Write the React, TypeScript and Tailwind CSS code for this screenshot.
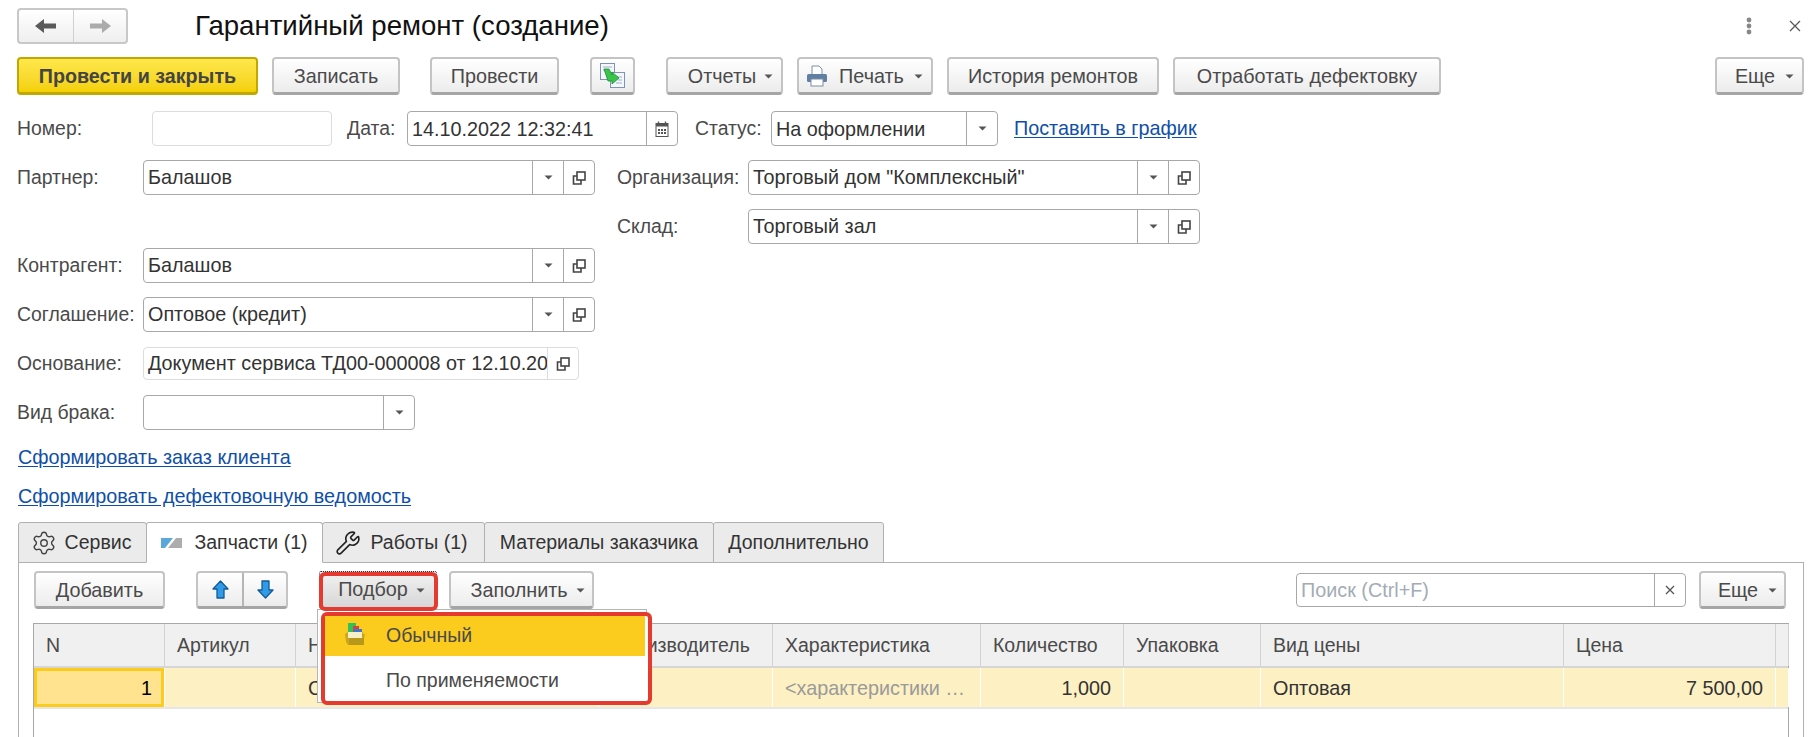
import React from "react";
import { Settings, Wrench } from "lucide-react";

const FONT = "font-['Liberation_Sans',Arial,sans-serif]";

function Caret({ className = "" }: { className?: string }) {
  return (
    <svg width="9" height="5" viewBox="0 0 9 5" className={className}>
      <path d="M0.5 0.5h8L4.5 4.5z" fill="#555" />
    </svg>
  );
}

function OpenIcon() {
  return (
    <svg width="16" height="16" viewBox="0 0 16 16" fill="none" stroke="#444" strokeWidth="1.6">
      <rect x="6" y="2" width="8" height="8" />
      <path d="M6 6H2.5v8H10v-4" />
    </svg>
  );
}

function Btn({
  w,
  ml = 0,
  children,
}: {
  w: number;
  ml?: number;
  children: React.ReactNode;
}) {
  return (
    <div
      style={{ width: w, marginLeft: ml }}
      className="h-[38px] shrink-0 flex items-center justify-center gap-2 rounded-[4px] border-2 border-[#c4c4c4] border-b-[3px] border-b-[#a5a5a5] bg-gradient-to-b from-white to-[#ececec] pt-[2px] text-[19.8px] text-[#4a4a4a]"
    >
      {children}
    </div>
  );
}

function Field({
  w,
  h = 35,
  value,
  select = true,
  open = true,
  light = false,
  ml = 0,
  nudge = false,
}: {
  w: number;
  h?: number;
  value?: string;
  select?: boolean;
  open?: boolean;
  light?: boolean;
  ml?: number;
  nudge?: boolean;
}) {
  const bc = light ? "border-[#dcdcdc]" : "border-[#a8a8a8]";
  return (
    <div
      style={{ width: w, height: h, marginLeft: ml }}
      className={`shrink-0 flex items-stretch rounded-[4px] border ${bc} bg-white text-[19.8px] text-[#333]`}
    >
      <div className={`flex-1 min-w-0 overflow-hidden whitespace-nowrap pl-[4px] flex items-center ${nudge ? "pt-[2px]" : ""}`}>{value}</div>
      {select && (
        <div className="w-[31px] border-l border-[#a8a8a8] flex items-center justify-center">
          <Caret />
        </div>
      )}
      {open && (
        <div className={`w-[31px] border-l ${bc} flex items-center justify-center`}>
          <OpenIcon />
        </div>
      )}
    </div>
  );
}

function Label({ w, ml = 0, children }: { w: number; ml?: number; children: React.ReactNode }) {
  return (
    <div style={{ width: w, marginLeft: ml }} className="shrink-0 text-[19.4px] text-[#4a4a4a] whitespace-nowrap">
      {children}
    </div>
  );
}

function Link({ children }: { children: React.ReactNode }) {
  return <span className="text-[19.8px] text-[#0f4fa8] underline underline-offset-2 whitespace-nowrap">{children}</span>;
}

function Tab({ w, active, children }: { w: number; active?: boolean; children: React.ReactNode }) {
  return (
    <div
      style={{ width: w }}
      className={`h-[41px] shrink-0 flex items-center justify-center gap-2 rounded-t-[3px] border border-[#b0b0b0] -mr-px text-[19.5px] text-[#333] ${
        active ? "bg-white border-b-white relative z-10" : "bg-[#ebebeb]"
      }`}
    >
      {children}
    </div>
  );
}

function Arrow({ up }: { up?: boolean }) {
  return (
    <svg width="17" height="19" viewBox="0 0 17 19">
      <path
        d={up ? "M8.5 1l7.5 8h-4v9H5V9H1z" : "M8.5 18L16 10h-4V1H5v9H1z"}
        fill="#2f9be8"
        stroke="#145a96"
        strokeWidth="1.3"
        strokeLinejoin="round"
      />
    </svg>
  );
}

const COLS = [
  { w: 131, h: "N" },
  { w: 131, h: "Артикул" },
  { w: 303, h: "Наименование" },
  { w: 174, h: "Производитель" },
  { w: 208, h: "Характеристика" },
  { w: 143, h: "Количество" },
  { w: 137, h: "Упаковка" },
  { w: 303, h: "Вид цены" },
  { w: 212, h: "Цена" },
  { w: 13, h: "" },
];

const ROW: { t: string; right?: boolean; cls?: string }[] = [
  { t: "1", right: true, cls: "bg-[#ffe38f] shadow-[inset_0_0_0_3px_#fbcb1e]" },
  { t: "" },
  { t: "Сумка" },
  { t: "" },
  { t: "<характеристики …", cls: "text-[#9a9a9a]" },
  { t: "1,000", right: true },
  { t: "" },
  { t: "Оптовая" },
  { t: "7 500,00", right: true },
  { t: "" },
];

export default function App() {
  return (
    <div className={`${FONT} relative w-[1815px] h-[737px] overflow-hidden bg-white`}>
      {/* Title row */}
      <div className="flex items-center h-[36px] mt-[8px] pl-[17px] pr-[14px]">
        <div className="w-[111px] h-[36px] flex rounded-[4px] border-2 border-[#c8c8c8] bg-gradient-to-b from-white to-[#efefef]">
          <div className="w-[55px] border-r border-[#d0d0d0] flex items-center justify-center">
            <svg width="22" height="16" viewBox="0 0 22 16">
              <path d="M0 8l9-7v4.5h12v5H9V15z" fill="#5a5a5a" />
            </svg>
          </div>
          <div className="flex-1 flex items-center justify-center">
            <svg width="22" height="16" viewBox="0 0 22 16">
              <path d="M22 8l-9-7v4.5H1v5h12V15z" fill="#ababab" />
            </svg>
          </div>
        </div>
        <div className="ml-[67px] text-[27.6px] leading-none text-[#111] whitespace-nowrap">Гарантийный ремонт (создание)</div>
        <div className="ml-auto flex items-center">
          <svg width="6" height="18" viewBox="0 0 6 18" fill="#888">
            <circle cx="3" cy="3" r="2.4" />
            <circle cx="3" cy="9" r="2.4" />
            <circle cx="3" cy="15" r="2.4" />
          </svg>
          <svg width="12" height="12" viewBox="0 0 12 12" className="ml-[37px]" stroke="#555" strokeWidth="1.2">
            <path d="M1 1l10 10M11 1L1 11" />
          </svg>
        </div>
      </div>

      {/* Command bar */}
      <div className="flex mt-[13px] pl-[17px] h-[38px]">
        <div className="w-[241px] h-[38px] flex items-center justify-center rounded-[4px] border-2 border-[#c0a800] border-b-[3px] bg-gradient-to-b from-[#ffe84a] to-[#f4d000] pt-[2px] text-[19.7px] font-bold text-[#444]">
          Провести и закрыть
        </div>
        <Btn w={128} ml={14}>Записать</Btn>
        <Btn w={129} ml={30}>Провести</Btn>
        <Btn w={45} ml={31}>
          <svg width="25" height="25" viewBox="0 0 25 25" className="-mt-[2px]">
            <rect x="0.5" y="0.5" width="14" height="16" fill="#f4f7fb" stroke="#7f94b5" />
            <rect x="10.5" y="9.5" width="14" height="15" fill="#f4f7fb" stroke="#7f94b5" />
            <path d="M3 4h9M3 7h4M16 14h6M18 17h4M16 20h6" stroke="#9db0c9" />
            <path d="M4 6L9 6L12 12L12 9L19 15L12 21L12 18L8 18z" fill="#39c44a" stroke="#1e8a35" strokeWidth="0.8" />
          </svg>
        </Btn>
        <Btn w={117} ml={31}>
          <span className="ml-[12px]">Отчеты</span>
          <Caret />
        </Btn>
        <Btn w={136} ml={14}>
          <svg width="22" height="22" viewBox="0 0 22 22" className="-ml-px -mt-[2px]">
            <path d="M6 1h7l3 3v6H6z" fill="#fff" stroke="#7e8ea3" />
            <rect x="1" y="9" width="20" height="8" rx="1.5" fill="#5f7fa3" />
            <rect x="5" y="14" width="12" height="7" fill="#fff" stroke="#7e8ea3" />
          </svg>
          <span className="ml-[3px]">Печать</span>
          <Caret className="ml-[2px]" />
        </Btn>
        <Btn w={212} ml={14}>История ремонтов</Btn>
        <Btn w={268} ml={14}>Отработать дефектовку</Btn>
        <Btn w={89} ml={274}>
          <span className="ml-[10px]">Еще</span>
          <Caret className="ml-[2px]" />
        </Btn>
      </div>

      {/* Row: number / date / status */}
      <div className="flex items-center h-[35px] mt-[16px] pl-[17px]">
        <Label w={135}>Номер:</Label>
        <Field w={180} light select={false} open={false} />
        <Label w={60} ml={15}>Дата:</Label>
        <div className="w-[271px] h-[35px] flex rounded-[4px] border border-[#a8a8a8] text-[19.8px] text-[#333]">
          <div className="flex-1 pl-[4px] pt-[2px] flex items-center">14.10.2022 12:32:41</div>
          <div className="w-[31px] border-l border-[#a8a8a8] flex items-center justify-center">
            <svg width="14" height="16" viewBox="0 0 14 16">
              <rect x="1" y="2.5" width="12" height="13" fill="#fff" stroke="#555" />
              <rect x="1" y="2.5" width="12" height="3" fill="#555" />
              <path d="M3.5 0.5v3M10.5 0.5v3" stroke="#555" strokeWidth="1.4" />
              <path d="M3 8h2v2H3zM6 8h2v2H6zM9 8h2v2H9zM3 11h2v2H3zM6 11h2v2H6zM9 11h2v2H9z" fill="#555" />
            </svg>
          </div>
        </div>
        <Label w={76} ml={17}>Статус:</Label>
        <Field w={227} value="На оформлении" open={false} nudge />
        <div className="ml-[16px]">
          <Link>Поставить в график</Link>
        </div>
      </div>

      {/* Form with two columns */}
      <div className="flex mt-[14px] pl-[17px]">
        <div className="w-[600px] shrink-0 flex flex-col">
          <div className="flex items-center">
            <Label w={126}>Партнер:</Label>
            <Field w={452} value="Балашов" />
          </div>
          <div className="flex items-center mt-[53px]">
            <Label w={126}>Контрагент:</Label>
            <Field w={452} value="Балашов" />
          </div>
          <div className="flex items-center mt-[14px]">
            <Label w={126}>Соглашение:</Label>
            <Field w={452} value="Оптовое (кредит)" />
          </div>
          <div className="flex items-center mt-[15px]">
            <Label w={126}>Основание:</Label>
            <Field w={436} h={33} light select={false} value="Документ сервиса ТД00-000008 от 12.10.2022" />
          </div>
          <div className="flex items-center mt-[15px]">
            <Label w={126}>Вид брака:</Label>
            <Field w={272} open={false} />
          </div>
          <div className="mt-[16px] h-[24px] flex items-center pl-px">
            <Link>Сформировать заказ клиента</Link>
          </div>
          <div className="mt-[15px] h-[24px] flex items-center pl-px">
            <Link>Сформировать дефектовочную ведомость</Link>
          </div>
        </div>
        <div className="flex flex-col">
          <div className="flex items-center">
            <Label w={131}>Организация:</Label>
            <Field w={452} value={'Торговый дом "Комплексный"'} />
          </div>
          <div className="flex items-center mt-[14px]">
            <Label w={131}>Склад:</Label>
            <Field w={452} value="Торговый зал" />
          </div>
        </div>
      </div>

      {/* Tabs */}
      <div className="flex mt-[13px] pl-[18px] h-[41px]">
        <Tab w={129}>
          <Settings size={26} strokeWidth={1.3} color="#444" className="-ml-[3px]" />
          <span>Сервис</span>
        </Tab>
        <Tab w={177} active>
          <svg width="21" height="12" viewBox="0 0 21 12">
            <path d="M0 1h12L4 11H0z" fill="#5aa7dc" />
            <path d="M21 1v10H7l8-10z" fill="#adadad" />
          </svg>
          <span className="ml-[4px]">Запчасти (1)</span>
        </Tab>
        <Tab w={163}>
          <Wrench size={26} strokeWidth={1.5} color="#222" className="-ml-[5px]" />
          <span className="ml-[2px]">Работы (1)</span>
        </Tab>
        <Tab w={230}>Материалы заказчика</Tab>
        <Tab w={171}>Дополнительно</Tab>
      </div>

      {/* Panel */}
      <div className="ml-[18px] w-[1786px] h-[200px] -mt-px border border-[#b0b0b0] px-[14px]">
        <div className="flex mt-[8px] h-[39px] pl-px">
          <Btn w={131}>Добавить</Btn>
          <div className="ml-[31px] w-[92px] h-[38px] flex rounded-[4px] border-2 border-[#c4c4c4] border-b-[3px] border-b-[#a5a5a5] bg-gradient-to-b from-white to-[#ececec]">
            <div className="w-[46px] border-r-2 border-[#b5b5b5] flex items-center justify-center">
              <Arrow up />
            </div>
            <div className="flex-1 flex items-center justify-center">
              <Arrow />
            </div>
          </div>
          <div className="ml-[31px] w-[118px] h-[38px] flex items-center justify-center gap-2 rounded-[2px] bg-gradient-to-b from-[#f2f2f2] to-[#d6d6d6] text-[19.8px] text-[#4a4a4a] border border-dotted border-[#333]">
            <span className="ml-[7px]">Подбор</span>
            <Caret />
          </div>
          <Btn w={145} ml={12}>
            <span className="ml-[12px]">Заполнить</span>
            <Caret />
          </Btn>
          <div className="ml-[702px] mt-[2px] w-[390px] h-[34px] flex rounded-[4px] border border-[#a8a8a8] text-[19.8px] text-[#a3acb5]">
            <div className="flex-1 pl-[4px] pt-[2px] flex items-center">Поиск (Ctrl+F)</div>
            <div className="w-[31px] border-l border-[#a8a8a8] flex items-center justify-center">
              <svg width="10" height="10" viewBox="0 0 10 10" stroke="#555" strokeWidth="1.3">
                <path d="M1 1l8 8M9 1L1 9" />
              </svg>
            </div>
          </div>
          <Btn w={87} ml={13}>
            <span className="ml-[10px]">Еще</span>
            <Caret className="ml-[2px]" />
          </Btn>
        </div>

        {/* Table */}
        <div className="mt-[13px] w-[1756px] h-[140px] border-t border-x border-[#a8a8a8]">
          <div className="flex h-[44px] bg-[#f0f0f0] border-b-2 border-[#d6d6d6]">
            {COLS.map((c, i) => (
              <div
                key={i}
                style={{ width: c.w }}
                className="shrink-0 border-r border-[#d2d2d2] pl-[12px] pt-[2px] flex items-center text-[19.5px] text-[#4a4a4a] whitespace-nowrap overflow-hidden"
              >
                {c.h}
              </div>
            ))}
          </div>
          <div className="flex h-[41px] bg-[#fdf0c3] border-b-2 border-[#e6e6e6]">
            {ROW.map((c, i) => (
              <div
                key={i}
                style={{ width: COLS[i].w }}
                className={`shrink-0 border-r border-white pt-[2px] flex items-center text-[19.8px] whitespace-nowrap overflow-hidden ${
                  c.right ? "justify-end pr-[12px]" : "pl-[12px]"
                } ${c.cls ?? "text-[#333]"}`}
              >
                {c.t}
              </div>
            ))}
          </div>
        </div>
      </div>

      {/* Popup menu */}
      <div className="absolute left-[317px] top-[609px] w-[330px] h-[94px] bg-white border border-[#b5b5b5]" />
      <div className="absolute left-[321px] top-[612px] w-[331px] h-[93px] rounded-[6px] border-[4px] border-[#e53a2f] bg-white text-[19.5px] text-[#4a4a4a]">
        <div className="h-[40px] w-[320px] bg-[#fbcc1e] flex items-center pl-[20px]">
          <svg width="20" height="22" viewBox="0 0 20 22" className="shrink-0 -mt-[4px]">
            <rect x="3" y="0" width="8" height="14" fill="#2fc25a" />
            <rect x="8" y="3" width="6" height="8" fill="#d9413a" />
            <rect x="9" y="6" width="8" height="4" fill="#3c78d0" />
            <path d="M3 9h14v6H3z" fill="#f6f0c8" />
            <path d="M0 11l3-2v6h14V9l3 3-1 3v7H3l-2-3z" fill="#c8a71e" />
            <path d="M4 15h15v7H4z" fill="#b8981a" />
          </svg>
          <span className="ml-[21px]">Обычный</span>
        </div>
        <div className="h-[45px] flex items-center pl-[61px] pt-[4px]">По применяемости</div>
      </div>
      <div className="absolute left-[319px] top-[572px] w-[119px] h-[39px] rounded-[6px] border-[4px] border-[#e53a2f]" />
    </div>
  );
}
